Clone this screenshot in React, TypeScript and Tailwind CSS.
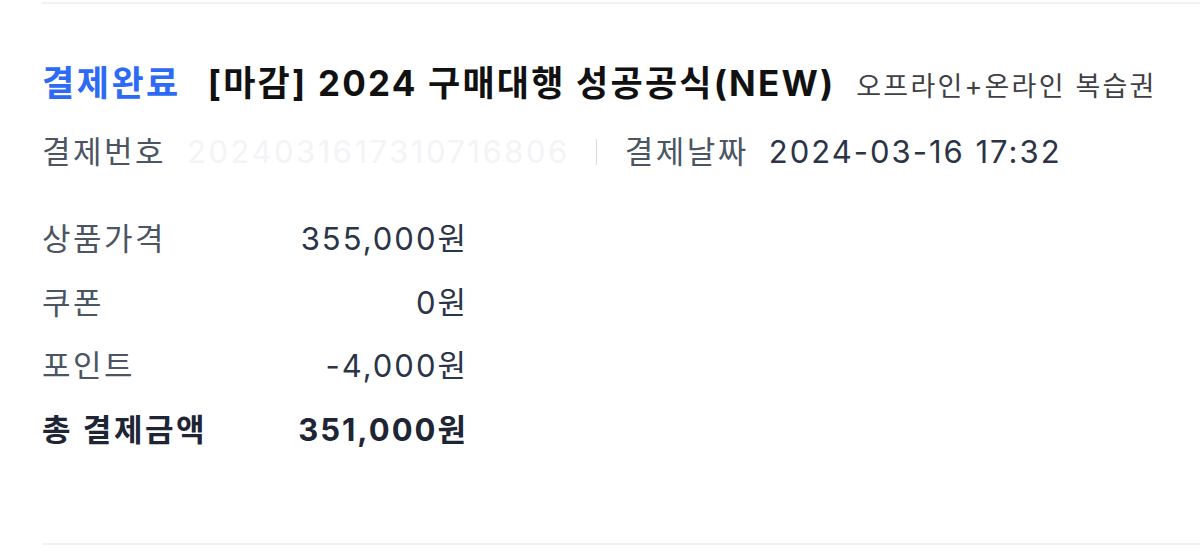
import React from 'react';

const font = { fontFamily: '"Inter", "Noto Sans CJK KR", sans-serif' };

const rows = [
  { label: '상품가격', value: '355,000원' },
  { label: '쿠폰', value: '0원' },
  { label: '포인트', value: '-4,000원' },
];

export default function App() {
  return (
    <div className="w-[1200px] h-[552px] bg-white overflow-hidden pl-[42px] pt-[2px]" style={font}>
      <div className="border-t-2 border-b-2 border-[#f1f2f4] h-[543px] flex flex-col">
        {/* 제목 */}
        <div className="flex items-baseline mt-[57px] leading-[44px] whitespace-nowrap">
          <span className="text-[35px] font-bold text-[#2d6af5] tracking-[2.5px]">결제완료</span>
          <span className="ml-[27px] text-[35px] font-bold text-[#111111] tracking-[2.2px]">
            [마감] 2024 구매대행 성공공식(NEW)
          </span>
          <span className="ml-[21px] text-[27px] text-[#3f3f46] tracking-[2.2px]">오프라인+온라인 복습권</span>
        </div>

        {/* 결제 정보 */}
        <div className="flex items-center mt-[21px] text-[31px] leading-[44px] tracking-[2.5px] whitespace-nowrap">
          <span className="text-[#4b5563]">결제번호</span>
          <span className="ml-[21px] text-[#f3f4f6]">2024031617310716806</span>
          <span className="ml-[26px] w-[1px] h-[26px] bg-[#d9dce1]" />
          <span className="ml-[28px] text-[#4b5563]">결제날짜</span>
          <span className="ml-[20px] text-[#2b3448] tracking-[2px]">2024-03-16 17:32</span>
        </div>

        {/* 금액 */}
        <div className="mt-[43px] w-[426px] flex flex-col text-[31px] leading-[44px] tracking-[2.5px] gap-[19.5px] whitespace-nowrap">
          {rows.map((r) => (
            <div key={r.label} className="flex justify-between">
              <span className="text-[#4b5563]">{r.label}</span>
              <span className="text-[#2b3448] tracking-[2px]">{r.value}</span>
            </div>
          ))}
          <div className="flex justify-between font-bold text-[#1e2535]">
            <span>총 결제금액</span>
            <span className="tracking-[2px]">351,000원</span>
          </div>
        </div>
      </div>
    </div>
  );
}
